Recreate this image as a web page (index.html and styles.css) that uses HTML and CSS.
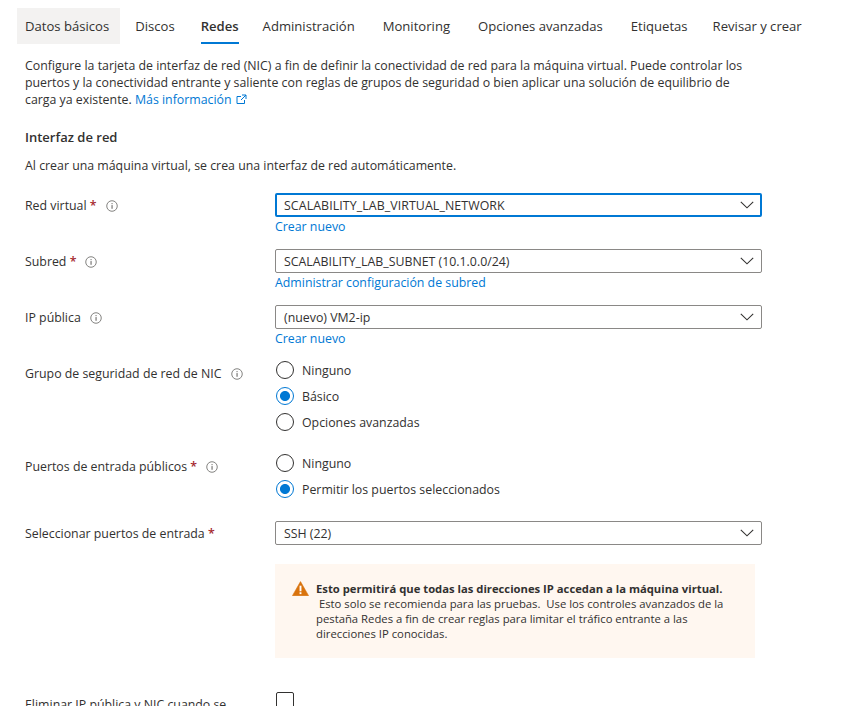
FILE: index.html
```html
<!DOCTYPE html>
<html lang="es">
<head>
<meta charset="utf-8">
<title>Redes</title>
<link rel="stylesheet" href="styles.css">
</head>
<body>
<svg class="defs" width="0" height="0" aria-hidden="true">
  <symbol id="info" viewBox="0 0 13 13">
    <circle cx="6.5" cy="6.5" r="5.7" fill="none" stroke="#7a7876" stroke-width="1"/>
    <rect x="6" y="5.5" width="1.1" height="4" fill="#605e5c"/>
    <rect x="6" y="3.4" width="1.1" height="1.1" fill="#605e5c"/>
  </symbol>
  <symbol id="chev" viewBox="0 0 14 8">
    <path d="M0.8 0.8 L7 6.8 L13.2 0.8" fill="none" stroke="#323130" stroke-width="1.1"/>
  </symbol>
</svg>
<main class="page">
  <nav class="tabs">
    <span class="tab tab-hover">Datos básicos</span>
    <span class="tab">Discos</span>
    <span class="tab tab-active">Redes</span>
    <span class="tab t-admin">Administración</span>
    <span class="tab t-mon">Monitoring</span>
    <span class="tab t-opt">Opciones avanzadas</span>
    <span class="tab t-eti">Etiquetas</span>
    <span class="tab">Revisar y crear</span>
  </nav>
  <p class="intro">Configure la tarjeta de interfaz de red (NIC) a fin de definir la conectividad de red para la máquina virtual. Puede controlar los puertos y la conectividad entrante y saliente con reglas de grupos de seguridad o bien aplicar una solución de equilibrio de carga ya existente. <a class="link">Más información <svg class="ext" width="11" height="11" viewBox="0 0 11 11"><path d="M8.5 6v3.5h-7.5v-7h4M6 1h4v4M10 1L5 6" fill="none" stroke="#0078d4" stroke-width="1"/></svg></a></p>
  <h2 class="heading">Interfaz de red</h2>
  <p class="sub">Al crear una máquina virtual, se crea una interfaz de red automáticamente.</p>

  <section class="form">
    <div class="row r-select">
      <div class="label">Red virtual <span class="req">*</span><svg class="info"><use href="#info"/></svg></div>
      <div class="field">
        <div class="select focus"><span>SCALABILITY_LAB_VIRTUAL_NETWORK</span><svg class="chev"><use href="#chev"/></svg></div>
        <a class="link under">Crear nuevo</a>
      </div>
    </div>
    <div class="row r-select">
      <div class="label">Subred <span class="req">*</span><svg class="info"><use href="#info"/></svg></div>
      <div class="field">
        <div class="select"><span>SCALABILITY_LAB_SUBNET (10.1.0.0/24)</span><svg class="chev"><use href="#chev"/></svg></div>
        <a class="link under">Administrar configuración de subred</a>
      </div>
    </div>
    <div class="row r-select">
      <div class="label">IP pública<svg class="info"><use href="#info"/></svg></div>
      <div class="field">
        <div class="select"><span>(nuevo) VM2-ip</span><svg class="chev"><use href="#chev"/></svg></div>
        <a class="link under">Crear nuevo</a>
      </div>
    </div>
    <div class="row r-radio3">
      <div class="label">Grupo de seguridad de red de NIC<svg class="info"><use href="#info"/></svg></div>
      <div class="field radios">
        <div class="radio"><i class="dot"></i>Ninguno</div>
        <div class="radio"><i class="dot on"></i>Básico</div>
        <div class="radio"><i class="dot"></i>Opciones avanzadas</div>
      </div>
    </div>
    <div class="row r-radio2">
      <div class="label">Puertos de entrada públicos <span class="req">*</span><svg class="info"><use href="#info"/></svg></div>
      <div class="field radios">
        <div class="radio"><i class="dot"></i>Ninguno</div>
        <div class="radio"><i class="dot on"></i>Permitir los puertos seleccionados</div>
      </div>
    </div>
    <div class="row r-ports">
      <div class="label">Seleccionar puertos de entrada <span class="req">*</span></div>
      <div class="field">
        <div class="select"><span>SSH (22)</span><svg class="chev"><use href="#chev"/></svg></div>
        <div class="warn">
          <svg class="warn-icon" width="17" height="15" viewBox="0 0 18 16"><path d="M9 0.6 L17.6 15.6 H0.4 Z" fill="#d9730d" stroke="#d9730d" stroke-width="0.6" stroke-linejoin="round"/><rect x="8" y="5" width="2" height="6" fill="#fff"/><rect x="8" y="12" width="2" height="2" fill="#fff"/></svg>
          <div class="warn-text">
            <strong>Esto permitirá que todas las direcciones IP accedan a la máquina virtual.</strong>
            <span class="warn-body">&nbsp;Esto solo se recomienda para las pruebas.&nbsp; Use los controles avanzados de la pestaña Redes a fin de crear reglas para limitar el tráfico entrante a las direcciones IP conocidas.</span>
          </div>
        </div>
      </div>
    </div>
    <div class="row r-check">
      <div class="label">Eliminar IP pública y NIC cuando se</div>
      <div class="field"><i class="check"></i></div>
    </div>
  </section>
</main>
</body>
</html>
```
FILE: styles.css
```css
html, body {
  margin: 0;
  padding: 0;
  height: 706px;
  overflow: hidden;
  background: #fff;
}
body {
  font-family: "Open Sans", "Noto Sans", sans-serif;
  font-size: 12.35px;
  color: #323130;
}
.defs { position: absolute; }
.page { padding: 8px 0 0 25px; width: 800px; }
.tabs {
  display: flex;
  height: 36px;
  font-size: 13.1px;
  line-height: 37px;
  white-space: nowrap;
}
.tab { margin-right: 26px; position: relative; }
.tab-hover { background: #f3f2f1; margin-left: -8px; padding: 0 11px 0 8px; margin-right: 15px; }
.tab-active { font-weight: 600; margin-right: 24px; }
.tab-active::after {
  content: "";
  position: absolute;
  left: 0; right: 0; bottom: 0;
  height: 2px;
  background: #0078d4;
}
.t-admin { margin-right: 28px; }
.t-mon { margin-right: 28px; }
.t-opt { margin-right: 28px; }
.t-eti { margin-right: 25px; }
.intro {
  margin: 12.5px 0 0;
  width: 720px;
  line-height: 17.3px;
}
.link { color: #0078d4; }
.ext { vertical-align: -1px; margin-left: 1px; }
.heading {
  margin: 19.25px 0 0;
  font-size: 13px;
  line-height: 18px;
  font-weight: 600;
}
.sub { margin: 11px 0 0; line-height: 18px; }
.form { margin-top: 18.5px; }
.row { display: grid; grid-template-columns: 250px 487px; }
.r-select { height: 56px; }
.r-radio3 { height: 93px; }
.r-radio2 { height: 67px; }
.r-ports { height: 171px; }
.label { line-height: 26px; white-space: nowrap; }
.req { color: #a4262c; font-weight: 600; }
.info { width: 12px; height: 12px; margin-left: 9px; vertical-align: -2px; }
.select {
  box-sizing: border-box;
  height: 24px;
  border: 1px solid #8a8886;
  border-radius: 2px;
  padding: 0 7px 0 8px;
  display: flex;
  align-items: center;
  justify-content: space-between;
}
.select.focus { border: 2px solid #0078d4; padding-left: 7px; padding-right: 6px; letter-spacing: 0.1px; }
.chev { width: 14px; height: 8px; }
.under { display: block; line-height: 18px; margin-top: 1px; }
.radios { display: flex; flex-direction: column; gap: 8px; }
.radio { display: flex; align-items: center; height: 18px; gap: 8px; }
.dot {
  box-sizing: border-box;
  width: 18px;
  height: 18px;
  margin-left: 1px;
  border: 1px solid #323130;
  border-radius: 50%;
  background: #fff;
}
.dot.on {
  border-color: #0078d4;
  background: radial-gradient(circle, #0078d4 0, #0078d4 4.6px, #fff 5.4px);
}
.warn {
  box-sizing: border-box;
  width: 480px;
  height: 94px;
  margin-top: 19px;
  background: #fff7f0;
  display: flex;
  gap: 7px;
  padding: 16px 17px;
}
.warn-icon { flex: none; margin-top: 1px; }
.warn-text { font-size: 11.3px; line-height: 15px; margin-top: 0.5px; }
.warn-text strong { display: block; font-weight: 700; font-size: 11.25px; }
.warn-body { display: block; }
.r-check { height: 30px; }
.r-check .label { line-height: 24px; padding-top: 0.5px; }
.check {
  display: block;
  box-sizing: border-box;
  width: 18px;
  height: 18px;
  margin-left: 1px;
  border: 1px solid #323130;
  border-radius: 2px;
}
```
